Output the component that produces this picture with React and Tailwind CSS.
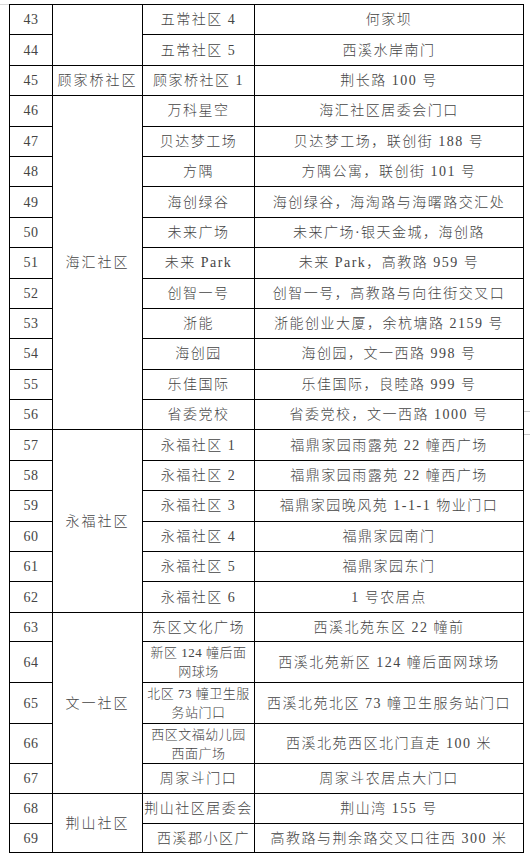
import React from "react";

const FONT = { fontFamily: '"Liberation Serif", "Noto Sans CJK SC", serif' };

// [num, community(or null if covered), rowSpan, site, address, height]
const rows = [
  ["43", null, 0, "五常社区 4", "何家坝", 30.4],
  ["44", null, 0, "五常社区 5", "西溪水岸南门", 30.4],
  ["45", "顾家桥社区", 1, "顾家桥社区 1", "荆长路 100 号", 30.4],
  ["46", "海汇社区", 11, "万科星空", "海汇社区居委会门口", 30.4],
  ["47", null, 0, "贝达梦工场", "贝达梦工场，联创街 188 号", 30.4],
  ["48", null, 0, "方隅", "方隅公寓，联创街 101 号", 30.4],
  ["49", null, 0, "海创绿谷", "海创绿谷，海淘路与海曙路交汇处", 30.4],
  ["50", null, 0, "未来广场", "未来广场·银天金城，海创路", 30.4],
  ["51", null, 0, "未来 Park", "未来 Park，高教路 959 号", 30.4],
  ["52", null, 0, "创智一号", "创智一号，高教路与向往街交叉口", 30.4],
  ["53", null, 0, "浙能", "浙能创业大厦，余杭塘路 2159 号", 30.4],
  ["54", null, 0, "海创园", "海创园，文一西路 998 号", 30.4],
  ["55", null, 0, "乐佳国际", "乐佳国际，良睦路 999 号", 30.4],
  ["56", null, 0, "省委党校", "省委党校，文一西路 1000 号", 30.4],
  ["57", "永福社区", 6, "永福社区 1", "福鼎家园雨露苑 22 幢西广场", 30.4],
  ["58", null, 0, "永福社区 2", "福鼎家园雨露苑 22 幢西广场", 30.4],
  ["59", null, 0, "永福社区 3", "福鼎家园晚风苑 1-1-1 物业门口", 30.4],
  ["60", null, 0, "永福社区 4", "福鼎家园南门", 30.4],
  ["61", null, 0, "永福社区 5", "福鼎家园东门", 30.4],
  ["62", null, 0, "永福社区 6", "1 号农居点", 30.4],
  ["63", "文一社区", 5, "东区文化广场", "西溪北苑东区 22 幢前", 29.5],
  ["64", null, 0, ["新区 124 幢后面", "网球场"], "西溪北苑新区 124 幢后面网球场", 41],
  ["65", null, 0, ["北区 73 幢卫生服", "务站门口"], "西溪北苑北区 73 幢卫生服务站门口", 41],
  ["66", null, 0, ["西区文福幼儿园", "西面广场"], "西溪北苑西区北门直走 100 米", 40],
  ["67", null, 0, "周家斗门口", "周家斗农居点大门口", 30],
  ["68", "荆山社区", 2, "荆山社区居委会", "荆山湾 155 号", 30],
  ["69", null, 0, "西溪郡小区广", "高教路与荆余路交叉口往西 300 米", 29],
];

export default function App() {
  return (
    <div className="relative w-[530px] h-[858px] bg-white overflow-hidden" style={FONT}>
      <div className="absolute left-0 top-[4px] w-[9px] h-px bg-[#d8d8d8]" />
      <div className="absolute left-[524px] top-[411px] w-[6px] h-px bg-[#c8c8c8]" />
      <div className="absolute left-[524px] top-[434px] w-[6px] h-px bg-[#c8c8c8]" />
      <div className="pt-[4px] pl-[9px]">
        <table className="border-collapse table-fixed w-[514px] text-[14px] text-[#454545] font-light leading-[17px]">
          <colgroup>
            <col className="w-[43px]" />
            <col className="w-[90px]" />
            <col className="w-[112px]" />
            <col className="w-[269px]" />
          </colgroup>
          <tbody>
            {rows.map((r, i) => {
              const [num, comm, span, site, addr, h] = r;
              const firstRows = i === 0;
              return (
                <tr key={num} style={{ height: h }}>
                  <td className="border border-black text-center p-0 tracking-[0.5px]">{num}</td>
                  {firstRows && (
                    <td rowSpan={2} className="border border-black p-0" />
                  )}
                  {comm && (
                    <td rowSpan={span} className="border border-black text-center p-0 tracking-[2px]">
                      {comm}
                    </td>
                  )}
                  <td
                    className={
                      "border border-black p-0 whitespace-nowrap overflow-hidden " +
                      (num === "69" ? "text-right pr-[4px] tracking-[1.5px]" : "text-center tracking-[1.5px]")
                    }
                  >
                    {Array.isArray(site) ? (
                      <div className="flex flex-col items-center leading-[19px] text-[13px] tracking-[0.5px]">
                        <span>{site[0]}</span>
                        <span>{site[1]}</span>
                      </div>
                    ) : (
                      site
                    )}
                  </td>
                  <td className="border border-black text-center p-0 tracking-[1.5px] whitespace-nowrap">{addr}</td>
                </tr>
              );
            })}
          </tbody>
        </table>
      </div>
    </div>
  );
}
